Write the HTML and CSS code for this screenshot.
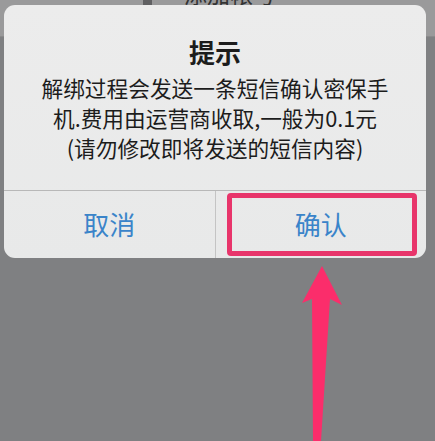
FILE: index.html
```html
<!DOCTYPE html>
<html lang="zh">
<head>
<meta charset="utf-8">
<title>提示</title>
<link rel="stylesheet" href="styles.css">
</head>
<body>
<div class="screen">
  <div class="header">
    <div class="header-row">
      <span class="header-bar"></span>
      <span class="header-text">添加帐号</span>
    </div>
  </div>
  <div class="dialog">
    <div class="dialog-content">
      <div class="dialog-title">提示</div>
      <div class="dialog-body">解绑过程会发送一条短信确认密保手<br>机.费用由运营商收取,一般为0.1元<br>(请勿修改即将发送的短信内容)</div>
    </div>
    <div class="dialog-actions">
      <div class="action">取消</div>
      <div class="action action-confirm">确认<span class="highlight"></span></div>
    </div>
  </div>
  <svg class="arrow" width="435" height="441" viewBox="0 0 435 441">
    <polygon points="322,266 342,305 330,299 321,441 313,441 312,299 302,303" fill="#fb2d6b"/>
  </svg>
</div>
</body>
</html>
```

FILE: styles.css
```css
html, body {
  margin: 0;
  padding: 0;
}
body {
  width: 435px;
  height: 441px;
  overflow: hidden;
  background: #7f8082;
  font-family: "Noto Sans CJK SC", "Noto Sans", sans-serif;
}
.screen {
  position: relative;
  width: 435px;
  height: 441px;
}
.header {
  height: 36px;
  background: #9a9a9b;
  overflow: hidden;
  border-bottom: 1px solid #8a8a8b;
}
.header-row {
  display: flex;
  align-items: flex-end;
  margin-top: -20px;
  height: 27px;
}
.header-bar {
  width: 9px;
  height: 27px;
  margin-left: 143px;
  background: #606062;
}
.header-text {
  margin-left: 32px;
  font-size: 23px;
  line-height: 27px;
  color: #333;
}
.dialog {
  position: absolute;
  top: 5px;
  left: 4px;
  width: 422px;
  height: 253px;
  border-radius: 11px;
  background: linear-gradient(#ececec, #e8e9e9);
  display: flex;
  flex-direction: column;
  overflow: hidden;
}
.dialog-content {
  padding-top: 32px;
  height: 153px;
  text-align: center;
  color: #1c1c1c;
  border-bottom: 1px solid #b8b8b8;
}
.dialog-title {
  font-size: 26px;
  line-height: 30px;
  font-weight: 700;
}
.dialog-body {
  margin-top: 6px;
  font-size: 21.7px;
  line-height: 30px;
}
.dialog-actions {
  display: flex;
  flex: 1;
}
.action {
  flex: 1;
  display: flex;
  align-items: center;
  justify-content: center;
  font-size: 26px;
  color: #3a84c9;
  padding-bottom: 2px;
}
.action-confirm {
  position: relative;
  border-left: 1px solid #c4c4c4;
}
.highlight {
  position: absolute;
  top: 2px;
  left: 11px;
  right: 9px;
  bottom: 2px;
  border: 5px solid #e8356b;
  border-radius: 4px;
}
.arrow {
  position: absolute;
  top: 0;
  left: 0;
}
```
